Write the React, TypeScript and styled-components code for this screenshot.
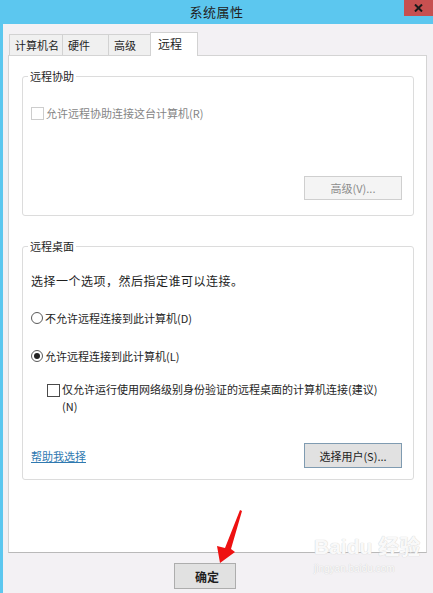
import React from "react"
import styled, { createGlobalStyle } from "styled-components"

const FONT = `"Noto Sans CJK SC", "Liberation Sans", sans-serif`
const BLUE = "#5cc7ef"

const GlobalStyle = createGlobalStyle`
	html, body {
		margin: 0;
		padding: 0;
		background: #f3f1f4;
	}
	body {
		font-family: ${FONT};
		font-size: 11px;
		color: #1e1e1e;
	}
`

const Window = styled.div`
	position: relative;
	width: 433px;
	height: 593px;
	display: flex;
	flex-direction: column;
	background: #f3f1f4;
	overflow: hidden;
`

const TitleBar = styled.div`
	height: 24px;
	flex-shrink: 0;
	display: grid;
	grid-template-columns: 1fr auto 1fr;
	background: ${BLUE};
`

const Title = styled.div`
	grid-column: 2;
	align-self: center;
	font-size: 13px;
	letter-spacing: 0.5px;
	line-height: 24px;
	color: #222;
`

const CloseButton = styled.div`
	grid-column: 3;
	justify-self: end;
	width: 29px;
	height: 16px;
	background: #c75050;
	display: flex;
	align-items: center;
	justify-content: center;
`

const Body = styled.div`
	flex: 1;
	display: flex;
	flex-direction: column;
	border-left: 3px solid ${BLUE};
	padding: 8px 6px 0 5px;
`

const TabRow = styled.div`
	display: flex;
	align-items: flex-end;
	height: 23px;
	padding-left: 2px;
`

const Tab = styled.div<{ $width: number; $active?: boolean }>`
	position: relative;
	box-sizing: border-box;
	width: ${(p) => p.$width}px;
	height: ${(p) => (p.$active ? 24 : 21)}px;
	margin-bottom: ${(p) => (p.$active ? -1 : 0)}px;
	margin-left: -1px;
	z-index: ${(p) => (p.$active ? 2 : 1)};
	border: 1px solid #d2d2d2;
	border-bottom: none;
	background: ${(p) => (p.$active ? "#fff" : "#f0f0f0")};
	padding: ${(p) => (p.$active ? "2px 0 0 7px" : "2px 0 0 5px")};
	font-size: ${(p) => (p.$active ? 12 : 11)}px;
	line-height: 17px;
	white-space: nowrap;
	color: #1e1e1e;
`

const Panel = styled.div`
	position: relative;
	z-index: 1;
	box-sizing: border-box;
	height: 498px;
	background: #fff;
	border: 1px solid #d4d4d4;
	border-bottom-color: #b9b9b9;
	padding: 12px 12px 0 13px;
`

const Group = styled.fieldset<{ $gap?: number }>`
	margin: ${(p) => p.$gap ?? 0}px 0 0 0;
	padding: 0 11px ${(p) => (p.$gap ? 11 : 15)}px 8px;
	border: 1px solid #dcdcdc;
	border-radius: 3px;
	min-inline-size: 0;
`

const Legend = styled.legend`
	margin-left: -3px;
	padding: 0 2px;
	font-size: 11px;
	line-height: 16px;
	color: #1e1e1e;
`

const Row = styled.div<{ $top: number; $muted?: boolean }>`
	display: flex;
	align-items: center;
	gap: 2px;
	height: 16px;
	margin-top: ${(p) => p.$top}px;
	font-size: 11px;
	line-height: 16px;
	color: ${(p) => (p.$muted ? "#858585" : "#1e1e1e")};
	white-space: nowrap;
`

const Text = styled.div<{ $top: number }>`
	margin-top: ${(p) => p.$top}px;
	font-size: 12px;
	letter-spacing: 0.5px;
	line-height: 16px;
	white-space: nowrap;
`

const CheckBox = styled.span<{ $muted?: boolean }>`
	box-sizing: border-box;
	flex-shrink: 0;
	width: 13px;
	height: 13px;
	background: #fff;
	border: 1px solid ${(p) => (p.$muted ? "#cdcdcd" : "#4a4a4a")};
`

const Radio = styled.span<{ $checked?: boolean }>`
	box-sizing: border-box;
	flex-shrink: 0;
	width: 12px;
	height: 12px;
	border-radius: 50%;
	border: 1px solid #5a5a5a;
	background: #fff;
	display: flex;
	align-items: center;
	justify-content: center;
	&::after {
		content: "";
		display: ${(p) => (p.$checked ? "block" : "none")};
		width: 6px;
		height: 6px;
		border-radius: 50%;
		background: #222;
	}
`

const LongCheck = styled.div`
	display: flex;
	align-items: flex-start;
	gap: 2px;
	margin-top: 17px;
	padding-left: 16px;
	font-size: 11px;
	line-height: 17px;
	white-space: nowrap;
	& > ${CheckBox} {
		margin-top: 3px;
	}
`

const ButtonRow = styled.div<{ $top: number; $spread?: boolean }>`
	display: flex;
	align-items: center;
	justify-content: ${(p) => (p.$spread ? "space-between" : "flex-end")};
	margin-top: ${(p) => p.$top}px;
`

const Button = styled.div<{ $disabled?: boolean; $width: number; $height: number; $focus?: boolean }>`
	box-sizing: border-box;
	width: ${(p) => p.$width}px;
	height: ${(p) => p.$height}px;
	display: flex;
	align-items: center;
	justify-content: center;
	font-size: 11px;
	white-space: nowrap;
	background: ${(p) => (p.$disabled ? "#f4f4f4" : "#e1e1e1")};
	border: 1px solid ${(p) => (p.$disabled ? "#cfcfcf" : p.$focus ? "#7f9bb1" : "#adadad")};
	color: ${(p) => (p.$disabled ? "#8c8c8c" : "#1e1e1e")};
`

const OkButton = styled(Button)`
	font-size: 12px;
	font-weight: bold;
	padding-left: 4px;
`

const HelpLink = styled.span`
	font-size: 11px;
	line-height: 16px;
	color: #2f79b0;
	text-decoration: underline;
`

const Footer = styled.div`
	display: flex;
	padding: 10px 0 0 166px;
`

const Arrow = styled.svg`
	position: absolute;
	left: 205px;
	top: 505px;
	z-index: 5;
`

const Watermark = styled.div`
	position: absolute;
	left: 314px;
	top: 534px;
	z-index: 4;
	display: flex;
	flex-direction: column;
	align-items: flex-start;
	color: rgba(255, 255, 255, 0.9);
	text-shadow: 0 0 1px #d4d4d4, 0 0 1px #d4d4d4;
	font-family: "Liberation Sans", "Noto Sans CJK SC", sans-serif;
`

const WatermarkBig = styled.span`
	font-size: 21px;
	font-weight: bold;
	line-height: 26px;
`

const WatermarkSmall = styled.span`
	font-size: 10px;
	line-height: 14px;
	margin-top: 2px;
`

export default function App() {
	return (
		<>
			<GlobalStyle />
			<Window>
				<TitleBar>
					<Title>系统属性</Title>
					<CloseButton>
						<svg width="9" height="8" viewBox="0 0 9 8">
							<path d="M1 0.5 L8 7.5 M8 0.5 L1 7.5" stroke="#1a1a1a" strokeWidth="2" />
						</svg>
					</CloseButton>
				</TitleBar>
				<Body>
					<TabRow>
						<Tab $width={54}>计算机名</Tab>
						<Tab $width={47}>硬件</Tab>
						<Tab $width={43}>高级</Tab>
						<Tab $width={48} $active>
							远程
						</Tab>
					</TabRow>
					<Panel>
						<Group>
							<Legend>远程协助</Legend>
							<Row $top={21} $muted>
								<CheckBox $muted />
								允许远程协助连接这台计算机(R)
							</Row>
							<ButtonRow $top={55}>
								<Button $disabled $width={98} $height={24}>
									高级(V)...
								</Button>
							</ButtonRow>
						</Group>
						<Group $gap={22}>
							<Legend>远程桌面</Legend>
							<Text $top={19}>选择一个选项，然后指定谁可以连接。</Text>
							<Row $top={21}>
								<Radio />
								不允许远程连接到此计算机(D)
							</Row>
							<Row $top={22}>
								<Radio $checked />
								允许远程连接到此计算机(L)
							</Row>
							<LongCheck>
								<CheckBox />
								<div>
									仅允许运行使用网络级别身份验证的远程桌面的计算机连接(建议)
									<br />
									(N)
								</div>
							</LongCheck>
							<ButtonRow $top={28} $spread>
								<HelpLink>帮助我选择</HelpLink>
								<Button $width={98} $height={25} $focus>
									选择用户(S)...
								</Button>
							</ButtonRow>
						</Group>
					</Panel>
					<Footer>
						<OkButton $width={62} $height={26}>
							确定
						</OkButton>
					</Footer>
				</Body>
				<Watermark>
					<WatermarkBig>Baidu 经验</WatermarkBig>
					<WatermarkSmall>jingyan.baidu.com</WatermarkSmall>
				</Watermark>
				<Arrow width="45" height="65" viewBox="0 0 45 65">
					<path d="M35 5 L37 6 L26 44 L30 47 L15 58 L12 41 L20 43 Z" fill="#ee1111" />
				</Arrow>
			</Window>
		</>
	)
}
